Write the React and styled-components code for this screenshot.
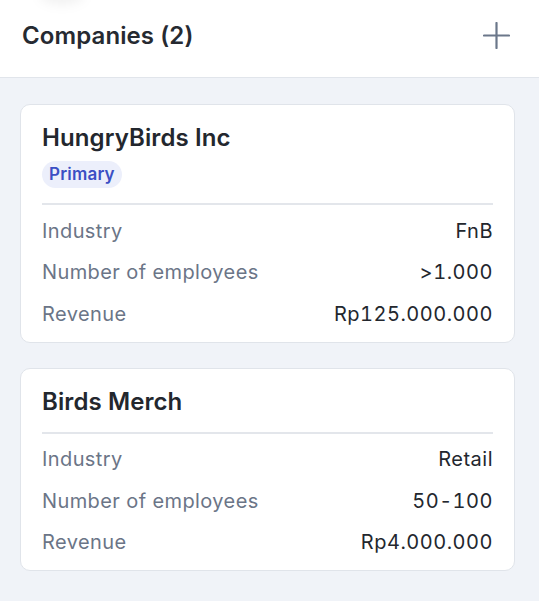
import React from "react";
import styled, { createGlobalStyle } from "styled-components";

const GlobalStyle = createGlobalStyle`
  html, body {
    margin: 0;
    padding: 0;
    background: #f0f3f8;
    font-family: Inter, "Noto Sans", sans-serif;
    -webkit-font-smoothing: antialiased;
  }
`;

const Page = styled.div`
  min-height: 601px;
  background: #f0f3f8;
`;

const Header = styled.header`
  position: relative;
  height: 78px;
  box-sizing: border-box;
  padding: 0 29px 6px 22px;
  display: flex;
  align-items: center;
  justify-content: space-between;
  background: #ffffff;
  border-bottom: 1px solid #e1e5eb;
`;

const TopShadow = styled.div`
  position: absolute;
  top: -14px;
  left: 40px;
  width: 44px;
  height: 18px;
  border-radius: 50%;
  background: rgba(0, 0, 0, 0.06);
  filter: blur(6px);
`;

const Title = styled.h1`
  margin: 0;
  font-size: 24px;
  font-weight: 600;
  color: #262a31;
  letter-spacing: 0.1px;
`;

const AddButton = styled.button`
  border: 0;
  background: none;
  padding: 0;
  width: 27px;
  height: 27px;
  display: flex;
  align-items: center;
  justify-content: center;
  color: #6b778a;
  cursor: pointer;
`;

const List = styled.div`
  padding: 26px 24px 26px 20px;
  display: flex;
  flex-direction: column;
  gap: 25px;
`;

const Card = styled.div`
  background: #ffffff;
  border: 1px solid #e0e4ea;
  border-radius: 10px;
  padding: 0 21px;
`;

const CardHead = styled.div`
  padding: 18px 0 15px;
  display: flex;
  flex-direction: column;
  align-items: flex-start;
  gap: 8px;
  border-bottom: 2px solid #e3e6eb;
`;

const CardTitle = styled.h2`
  margin: 0;
  font-size: 24px;
  line-height: 30px;
  font-weight: 600;
  color: #23272e;
  letter-spacing: 0.1px;
`;

const Badge = styled.span`
  display: inline-block;
  padding: 0 7px;
  height: 27px;
  line-height: 27px;
  border-radius: 14px;
  background: #eceffb;
  color: #3b4fc4;
  font-size: 17px;
  font-weight: 600;
  letter-spacing: 0.2px;
`;

const Rows = styled.div`
  padding: 5px 0 7px;
`;

const Row = styled.div`
  height: 41.5px;
  display: flex;
  align-items: center;
  justify-content: space-between;
  font-size: 20px;
  letter-spacing: 0.4px;
`;

const Label = styled.span`
  color: #6b7587;
`;

const Value = styled.span`
  color: #23272e;
  font-variant-numeric: tabular-nums;
  letter-spacing: 0.5px;
`;

const PlusIcon = () => (
  <svg width="27" height="27" viewBox="0 0 27 27" fill="none">
    <path d="M13.5 1v25M1 13.5h25" stroke="currentColor" strokeWidth="2.2" strokeLinecap="round" />
  </svg>
);

const companies = [
  {
    name: "HungryBirds Inc",
    primary: true,
    industry: "FnB",
    employees: ">1.000",
    revenue: "Rp125.000.000",
  },
  {
    name: "Birds Merch",
    primary: false,
    industry: "Retail",
    employees: "50-100",
    revenue: "Rp4.000.000",
  },
];

const CompanyCard = ({ data }) => (
  <Card>
    <CardHead>
      <CardTitle>{data.name}</CardTitle>
      {data.primary && <Badge>Primary</Badge>}
    </CardHead>
    <Rows>
      <Row>
        <Label>Industry</Label>
        <Value>{data.industry}</Value>
      </Row>
      <Row>
        <Label>Number of employees</Label>
        <Value>{data.employees}</Value>
      </Row>
      <Row>
        <Label>Revenue</Label>
        <Value>{data.revenue}</Value>
      </Row>
    </Rows>
  </Card>
);

const App = () => (
  <Page>
    <GlobalStyle />
    <Header>
      <TopShadow />
      <Title>{`Companies (${companies.length})`}</Title>
      <AddButton aria-label="Add company">
        <PlusIcon />
      </AddButton>
    </Header>
    <List>
      {companies.map((c) => (
        <CompanyCard key={c.name} data={c} />
      ))}
    </List>
  </Page>
);

export default App;
